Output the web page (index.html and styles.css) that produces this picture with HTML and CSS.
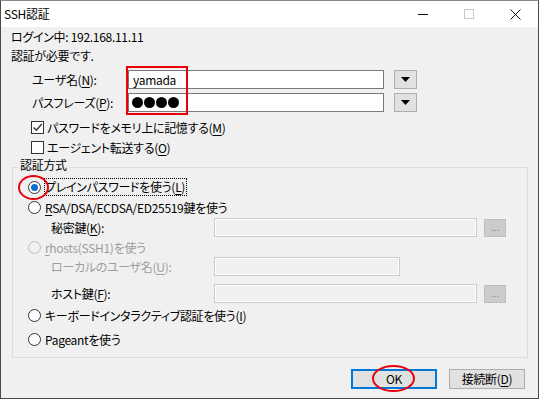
FILE: index.html
```html
<!DOCTYPE html>
<html lang="ja">
<head>
<meta charset="utf-8">
<link rel="stylesheet" href="styles.css">
</head>
<body>
<div class="window">
  <div class="titlebar">
    <span class="title">SSH認証</span>
    <span class="controls">
      <span class="ctl"><span class="min"></span></span>
      <span class="ctl"><span class="max"></span></span>
      <span class="ctl"><svg width="11" height="11" viewBox="0 0 11 11"><path d="M0.5 0.5 L10.5 10.5 M10.5 0.5 L0.5 10.5" stroke="#111" stroke-width="1" fill="none"/></svg></span>
    </span>
  </div>
  <div class="content">
    <div class="info">ログイン中: 192.168.11.11</div>
    <div class="info">認証が必要です.</div>

    <div class="frow first">
      <span class="flabel">ユーザ名(<u>N</u>):</span>
      <span class="input">yamada</span>
      <span class="combo"><svg width="9" height="5" viewBox="0 0 9 5"><path d="M0 0 H9 L4.5 5 Z" fill="#000"/></svg></span>
    </div>
    <div class="frow">
      <span class="flabel">パスフレーズ(<u>P</u>):</span>
      <span class="input dots"><i></i><i></i><i></i><i></i></span>
      <span class="combo"><svg width="9" height="5" viewBox="0 0 9 5"><path d="M0 0 H9 L4.5 5 Z" fill="#000"/></svg></span>
    </div>

    <div class="crow first">
      <span class="check"><svg width="11" height="11" viewBox="0 0 11 11"><path d="M1.5 5.5 L4.3 8.3 L9.8 2" stroke="#333" stroke-width="1.4" fill="none"/></svg></span>
      <span>パスワードをメモリ上に記憶する(<u>M</u>)</span>
    </div>
    <div class="crow">
      <span class="check"></span>
      <span>エージェント転送する(<u>O</u>)</span>
    </div>

    <fieldset class="group">
      <legend>認証方式</legend>
      <div class="rrow r-plain"><span class="radio on"></span><span class="focus">プレインパスワードを使う(<u>L</u>)</span></div>
      <div class="rrow"><span class="radio"></span><span class="rtext"><u>R</u>SA/DSA/ECDSA/ED25519鍵を使う</span></div>
      <div class="srow r-key"><span class="slabel">秘密鍵(<u>K</u>):</span><span class="dinput wide"></span><span class="dbtn">...</span></div>
      <div class="rrow"><span class="radio off"></span><span class="rtext gray"><u>r</u>hosts(SSH1)を使う</span></div>
      <div class="srow"><span class="slabel gray">ローカルのユーザ名(<u>U</u>):</span><span class="dinput short"></span></div>
      <div class="srow r-host"><span class="slabel">ホスト鍵(<u>F</u>):</span><span class="dinput wide"></span><span class="dbtn">...</span></div>
      <div class="rrow r-kbd"><span class="radio"></span><span class="rtext">キーボードインタラクティブ認証を使う(<u>I</u>)</span></div>
      <div class="rrow r-pag"><span class="radio"></span><span class="rtext">Pageantを使う</span></div>
    </fieldset>

    <div class="buttons">
      <span class="btn ok">OK</span>
      <span class="btn cancel">接続断(<u>D</u>)</span>
    </div>
  </div>

  <div class="mark box-user"></div>
  <div class="mark oval oval-radio"></div>
  <div class="mark oval oval-ok"></div>
</div>
</body>
</html>
```
FILE: styles.css
```css
html, body {
  margin: 0;
  padding: 0;
  background: #ffffff;
}
body {
  font-family: "Noto Sans CJK JP", "Noto Sans", sans-serif;
  font-size: 12px;
  color: #000;
  font-feature-settings: "palt";
  letter-spacing: -0.3px;
}
u { text-decoration: underline; text-underline-offset: 2px; }

.window {
  position: relative;
  box-sizing: border-box;
  width: 539px;
  height: 399px;
  border: 1px solid #4a4a4a;
  border-top-color: #8a8a8a;
  background: #f0f0f0;
  display: flex;
  flex-direction: column;
}

.titlebar {
  height: 26px;
  background: #fff;
  display: flex;
  align-items: center;
  justify-content: space-between;
  flex: none;
}
.title { padding-left: 3px; line-height: 26px; }
.controls { display: flex; height: 26px; }
.ctl {
  width: 46px;
  display: flex;
  align-items: center;
  justify-content: center;
}
.min { width: 10px; height: 1px; background: #111; }
.max { width: 8px; height: 8px; border: 1px solid #c8c8c8; }

.content {
  flex: 1;
  display: flex;
  flex-direction: column;
}

.info { line-height: 19px; padding-left: 10px; height: 19px; }

.frow {
  display: flex;
  align-items: center;
  height: 19px;
  margin-top: 4px;
  padding-left: 31px;
}
.frow.first { margin-top: 5px; }
.flabel { width: 96px; }
.input {
  box-sizing: border-box;
  width: 256px;
  height: 19px;
  background: #fff;
  border: 1px solid #7a7a7a;
  padding-left: 4px;
  line-height: 16px;
  display: flex;
  align-items: center;
}
.dots { gap: 1px; padding-left: 3px; }
.dots i {
  display: block;
  width: 11px;
  height: 11px;
  border-radius: 50%;
  background: #000;
}
.combo {
  box-sizing: border-box;
  margin-left: 10px;
  width: 23px;
  height: 19px;
  background: #e1e1e1;
  border: 1px solid #adadad;
  display: flex;
  align-items: center;
  justify-content: center;
}

.crow {
  display: flex;
  align-items: center;
  height: 20px;
  padding-left: 30px;
  gap: 3px;
}
.crow.first { margin-top: 5px; }
.check {
  box-sizing: border-box;
  width: 13px;
  height: 13px;
  border: 1px solid #333;
  background: #fff;
  display: flex;
  align-items: center;
  justify-content: center;
}

.group {
  margin: 1px 0 0 11px;
  padding: 0 0 8px 0;
  width: 516px;
  box-sizing: border-box;
  border: 1px solid #dcdcdc;
  min-width: 0;
}
.group legend {
  margin-left: 5px;
  padding: 0 2px 4px 2px;
  line-height: 14px;
}

.rrow {
  display: flex;
  align-items: center;
  height: 20px;
  padding-left: 15px;
  gap: 3px;
}
.r-plain { margin-top: 1px; }
.r-kbd { margin-top: 2px; }
.r-pag { margin-top: 4px; }
.radio {
  box-sizing: border-box;
  width: 13px;
  height: 13px;
  border: 1px solid #333;
  border-radius: 50%;
  background: #fff;
  display: flex;
  align-items: center;
  justify-content: center;
}
.radio.on::after {
  content: "";
  width: 7px;
  height: 7px;
  border-radius: 50%;
  background: #0a6fd0;
}
.radio.off { border-color: #bcbcbc; background: #f0f0f0; }
.rtext { padding-left: 1px; }
.focus {
  border: 1px dotted #000;
  line-height: 16px;
  padding: 0 1px 0 0;
}
.gray { color: #9d9d9d; }

.srow {
  display: flex;
  align-items: center;
  height: 19px;
  padding-left: 38px;
}
.r-key { margin-top: 1px; }
.r-host { margin-top: 8px; }
.slabel { width: 163px; }
.dinput {
  box-sizing: border-box;
  height: 19px;
  border: 1px solid #cccccc;
  box-shadow: inset 0 0 0 1px #ffffff;
  background: #f0f0f0;
}
.dinput.wide { width: 263px; }
.dinput.short { width: 186px; }
.dbtn {
  box-sizing: border-box;
  margin-left: 7px;
  width: 22px;
  height: 18px;
  background: #cccccc;
  border: 1px solid #bfbfbf;
  color: #838383;
  font-size: 10px;
  line-height: 14px;
  text-align: center;
  letter-spacing: 0;
}

.buttons {
  display: flex;
  justify-content: flex-end;
  gap: 12px;
  margin-top: 11px;
  padding-right: 13px;
}
.btn {
  box-sizing: border-box;
  height: 20px;
  background: #e1e1e1;
  border: 1px solid #adadad;
  display: flex;
  align-items: center;
  justify-content: center;
  line-height: 16px;
}
.btn.ok { width: 86px; border: 2px solid #0078d7; }
.btn.cancel { width: 76px; }

.mark {
  position: absolute;
  box-sizing: border-box;
  border: 2px solid #e8000b;
}
.box-user { left: 125px; top: 65px; width: 62px; height: 49px; }
.oval { border-radius: 50%; }
.oval-radio { left: 17px; top: 174px; width: 31px; height: 25px; }
.oval-ok { left: 371px; top: 364px; width: 43px; height: 27px; }
```
